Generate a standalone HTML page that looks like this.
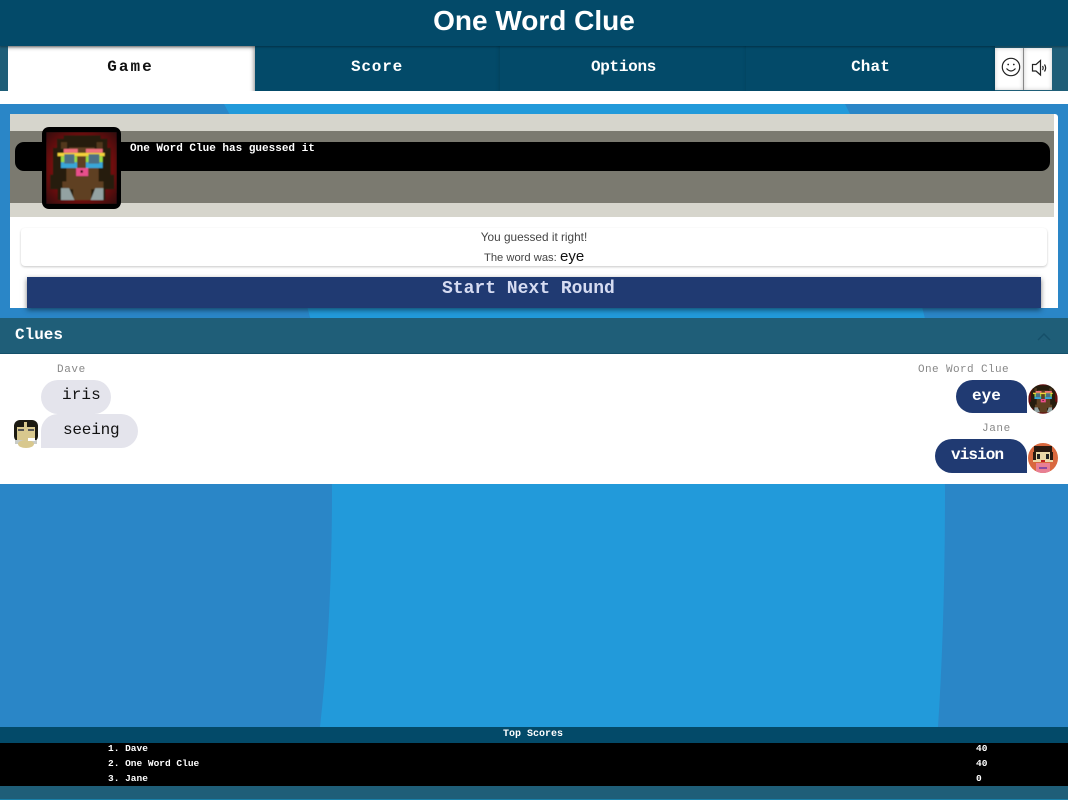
<!DOCTYPE html>
<html><head><meta charset="utf-8"><title>One Word Clue</title>
<style>
html,body{margin:0;padding:0;width:1068px;height:800px;overflow:hidden;background:#229ada}
body{position:relative;font-family:"Liberation Mono","DejaVu Sans Mono",monospace}
.a{position:absolute}
.t{position:absolute;white-space:nowrap;line-height:1}
.tab{position:absolute;top:46px;height:45px;background:#034a69;color:#fff;text-align:center;font:bold 16px/42px "Liberation Mono",monospace;box-shadow:inset -5px 0 5px -5px rgba(0,0,0,.2)}
.ib{position:absolute;top:48px;height:42px;background:#fff;box-shadow:inset 0 0 4px rgba(0,0,0,.22)}
</style></head><body>
<svg class="a" style="left:0;top:104px" width="1068" height="696" viewBox="0 104 1068 696">
<path d="M0 104H224Q332 300 332 490Q332 620 320 727H0Z" fill="#2a86c7"/>
<path d="M1068 104H845Q945 300 945 490Q945 620 938 727H1068Z" fill="#2a86c7"/>
</svg>

<div class="a" style="left:0;top:46px;width:1068px;height:45px;background:#1f5e78"></div>
<div class="a" style="left:0;top:91px;width:1068px;height:13px;background:#fff"></div>
<div class="tab" style="left:254px;width:246px;letter-spacing:.8px">Score</div>
<div class="tab" style="left:500px;width:247px;letter-spacing:-.3px">Options</div>
<div class="tab" style="left:746px;width:249px;letter-spacing:.1px">Chat</div>
<div class="tab" style="left:8px;width:247px;background:#fff;color:#111;letter-spacing:2px;text-indent:-2px;box-shadow:inset -5px 5px 5px -4px rgba(0,0,0,.45)">Game</div>
<div class="a" style="left:0;top:0;width:1068px;height:46px;background:#034a69;box-shadow:0 1px 2px rgba(0,0,0,.35)"></div>
<div class="t" style="left:0;top:6px;width:1068px;text-align:center;color:#fff;font:bold 28px/30px 'Liberation Sans',sans-serif">One Word Clue</div>
<div class="ib" style="left:995px;width:28px"></div>
<div class="a" style="left:1023px;top:48px;width:1px;height:42px;background:#888"></div>
<div class="ib" style="left:1024px;width:28px"></div>
<svg class="a" style="left:1001px;top:57px" width="20" height="20" viewBox="0 0 20 20" fill="none" stroke="#222" stroke-width="1.2"><circle cx="10" cy="10" r="8.700"/><circle cx="7.200" cy="7.500" r=".9" fill="#222" stroke="none"/><circle cx="12.800" cy="7.500" r=".9" fill="#222" stroke="none"/><path d="M5.500 11.500Q10 16.500 14.500 11.500"/></svg>
<svg class="a" style="left:1031px;top:59px" width="18" height="18" viewBox="0 0 18 18" fill="none" stroke="#222" stroke-width="1.200"><path d="M1.500 5.500H5L9.500 1.500V16L5 12H1.500Z"/><path d="M11.500 7Q12.800 9 11.500 11M13.500 5.500Q15.800 9 13.500 12.500"/></svg>

<div class="a" style="left:10px;top:114px;width:1048px;height:194px;background:#fff;border-radius:2px 3px 0 0"></div>
<div class="a" style="left:10px;top:114px;width:1044px;height:103px;background:#d6d5cc"></div>
<div class="a" style="left:10px;top:131px;width:1044px;height:72px;background:#7b7a70"></div>
<div class="a" style="left:15px;top:142px;width:1035px;height:29px;background:#000;border-radius:9px"></div>
<div class="t" style="left:130px;top:143px;color:#fff;font:bold 11px/12px 'Liberation Mono',monospace">One Word Clue has guessed it</div>

<div class="a" style="left:42px;top:127px;width:79px;height:82px;background:#000;border-radius:7px"></div>
<svg class="a" style="left:46px;top:132px" width="71" height="72" viewBox="48 38 210 214"><defs>
<radialGradient id="rg" cx=".5" cy=".5" r=".72"><stop offset=".55" stop-color="#7a0e12"/><stop offset="1" stop-color="#2e080b"/></radialGradient>
<filter id="bl" x="0" y="0" width="1" height="1"><feGaussianBlur stdDeviation="1.200"/></filter></defs>
<g id="av" filter="url(#bl)">
<rect x="48" y="38" width="210" height="214" fill="url(#rg)"/>
<path d="M80 58H100V48H210V58H230V85H240V165H250V208H224V240H82V208H60V165H68V85H80Z" fill="#251c0e"/>
<path d="M92 68H110V88H92ZM198 68H216V88H198Z" fill="#53381c"/>
<path d="M116 84H192V100H214V145H204V185H218V208H182V240H128V208H96V185H108V145H96V100H116Z" fill="#5f4120"/>
<path d="M92 205H116L132 240H92ZM180 240L194 205H218V240Z" fill="#93a2a2"/>
<rect x="100" y="88" width="42" height="12" fill="#ef6f7c"/><rect x="166" y="88" width="50" height="12" fill="#ef6f7c"/>
<rect x="82" y="100" width="140" height="10" fill="#f5d33a"/><rect x="92" y="110" width="48" height="18" fill="#9bdc42"/><rect x="166" y="110" width="50" height="18" fill="#9bdc42"/>
<rect x="92" y="128" width="48" height="17" fill="#37a7d8"/><rect x="166" y="128" width="50" height="17" fill="#37a7d8"/>
<rect x="102" y="104" width="30" height="28" fill="#4e7084"/><rect x="174" y="104" width="32" height="28" fill="#4e7084"/>
<rect x="137" y="145" width="36" height="24" fill="#e9508c"/><rect x="150" y="152" width="7" height="7" fill="#300"/>
</g></svg>

<div class="a" style="left:21px;top:228px;width:1026px;height:38px;background:#fff;border-radius:4px;box-shadow:0 1px 2px rgba(0,0,0,.22)"></div>
<div class="t" style="left:21px;top:230px;width:1026px;text-align:center;color:#444;font:11.800px/14px 'Liberation Sans',sans-serif">You guessed it right!</div>
<div class="t" style="left:484px;top:251px;color:#444;font:11.200px/14px 'Liberation Sans',sans-serif">The word was:</div>
<div class="t" style="left:560px;top:248px;color:#111;font:15px/17px 'Liberation Sans',sans-serif">eye</div>
<div class="a" style="left:27px;top:277px;width:1014px;height:31px;background:#203a72;box-shadow:0 2px 5px rgba(0,0,0,.5)"></div>
<div class="t" style="left:442px;top:280px;color:#d6dcf2;font:bold 18px/18px 'Liberation Mono',monospace">Start Next Round</div>

<div class="a" style="left:0;top:318px;width:1068px;height:36px;background:#1f5e78;border-bottom:1px solid #14506a;box-sizing:border-box"></div>
<div class="t" style="left:15px;top:327px;color:#fff;font:bold 16px/16px 'Liberation Mono',monospace">Clues</div>
<svg class="a" style="left:1036px;top:330px" width="16" height="12" fill="none" stroke="#154f69" stroke-width="1.500"><path d="M2 10L8 4L14 10"/></svg>

<div class="a" style="left:0;top:354px;width:1068px;height:130px;background:#fff"></div>
<div class="t" style="left:57px;top:365px;color:#888;font:11px/11px 'Liberation Mono',monospace;letter-spacing:.6px">Dave</div>
<div class="a" style="left:41px;top:380px;width:70px;height:34px;background:#e4e4ec;border-radius:17px"></div>
<div class="t" style="left:62px;top:387px;color:#111;font:16px/16px 'Liberation Mono',monospace;letter-spacing:.1px">iris</div>
<div class="a" style="left:41px;top:414px;width:97px;height:34px;background:#e4e4ec;border-radius:17px 17px 17px 0"></div>
<div class="t" style="left:63px;top:422px;color:#111;font:16px/16px 'Liberation Mono',monospace;letter-spacing:-.2px">seeing</div>
<svg class="a" style="left:13px;top:419px" width="26" height="30" viewBox="0 0 26 30">
<rect x="1" y="1" width="24" height="22" rx="6" fill="#1c1a12"/><rect x="4" y="8" width="18" height="15" fill="#d8c88e"/><rect x="11" y="3" width="3" height="7" fill="#d8c88e"/><rect x="5" y="10" width="6" height="2" fill="#555"/><rect x="15" y="10" width="6" height="2" fill="#555"/><rect x="2" y="21" width="22" height="4" fill="#c9ccc8"/><ellipse cx="13" cy="25" rx="8" ry="4" fill="#d8c88e"/><rect x="15" y="19" width="7" height="3" fill="#fff"/>
</svg>

<div class="t" style="left:918px;top:365px;color:#888;font:11px/11px 'Liberation Mono',monospace;letter-spacing:.4px">One Word Clue</div>
<div class="a" style="left:956px;top:380px;width:71px;height:33px;background:#203a72;border-radius:17px 17px 0 17px"></div>
<div class="t" style="left:972px;top:388px;color:#fff;font:bold 16px/16px 'Liberation Mono',monospace">eye</div>
<svg class="a" style="left:1028px;top:384px" width="30" height="30" viewBox="48 38 210 214"><defs><clipPath id="c1"><circle cx="153" cy="145" r="105"/></clipPath></defs><g clip-path="url(#c1)"><use href="#av"/></g></svg>
<div class="t" style="left:982px;top:424px;color:#888;font:11px/11px 'Liberation Mono',monospace;letter-spacing:.6px">Jane</div>
<div class="a" style="left:935px;top:439px;width:92px;height:34px;background:#203a72;border-radius:17px 17px 0 17px"></div>
<div class="t" style="left:951px;top:447px;color:#fff;font:bold 16px/16px 'Liberation Mono',monospace;letter-spacing:-.9px">vision</div>
<svg class="a" style="left:1028px;top:443px" width="30" height="30" viewBox="0 0 30 30"><defs><clipPath id="c2"><circle cx="15" cy="15" r="15"/></clipPath></defs><g clip-path="url(#c2)"><rect width="30" height="30" fill="#d9683e"/><rect x="6" y="3" width="18" height="7" fill="#2a1a10"/><rect x="5" y="9" width="20" height="10" fill="#ecd9a8"/><rect x="5" y="9" width="3" height="8" fill="#2a1a10"/><rect x="22" y="9" width="3" height="8" fill="#2a1a10"/><rect x="9" y="11" width="3" height="5" fill="#222"/><rect x="18" y="11" width="3" height="5" fill="#222"/><rect x="13" y="17" width="4" height="2" fill="#c02020"/><rect x="8" y="20" width="14" height="10" fill="#e87f94"/><rect x="11" y="24" width="8" height="2" fill="#8a4aa0"/></g></svg>

<div class="a" style="left:0;top:727px;width:1068px;height:16px;background:#034a69"></div>
<div class="t" style="left:503px;top:729px;color:#fff;font:bold 10px/11px 'Liberation Mono',monospace">Top Scores</div>
<div class="a" style="left:0;top:743px;width:1068px;height:43px;background:#000"></div>
<div class="a" style="left:0;top:786px;width:1068px;height:13px;background:#1f5e78"></div>
<div class="a" style="left:0;top:799px;width:1068px;height:1px;background:#1a80a8"></div>
<div class="t" style="left:108px;top:744px;color:#fff;font:bold 9.500px/10px 'Liberation Mono',monospace">1. Dave</div>
<div class="t" style="left:108px;top:759px;color:#fff;font:bold 9.500px/10px 'Liberation Mono',monospace">2. One Word Clue</div>
<div class="t" style="left:108px;top:774px;color:#fff;font:bold 9.500px/10px 'Liberation Mono',monospace">3. Jane</div>
<div class="t" style="left:976px;top:744px;color:#fff;font:bold 9.500px/10px 'Liberation Mono',monospace">40</div>
<div class="t" style="left:976px;top:759px;color:#fff;font:bold 9.500px/10px 'Liberation Mono',monospace">40</div>
<div class="t" style="left:976px;top:774px;color:#fff;font:bold 9.500px/10px 'Liberation Mono',monospace">0</div>
</body></html>
